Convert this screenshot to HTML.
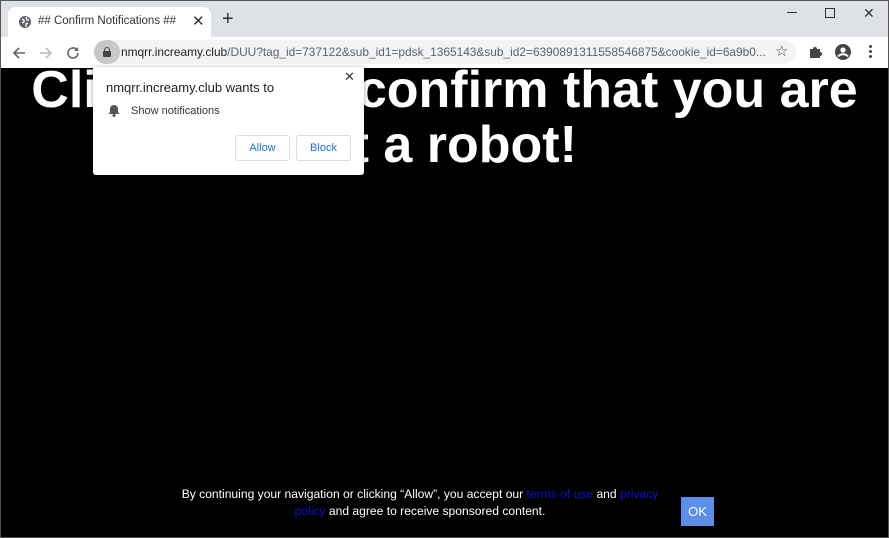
<!DOCTYPE html>
<html><head><style>
*{margin:0;padding:0;box-sizing:border-box}
body{width:889px;height:538px;overflow:hidden;background:#000;font-family:"Liberation Sans",Arial,sans-serif;position:relative}
.frame{position:absolute;inset:0;border:1px solid #555;pointer-events:none;z-index:10}
.tabbar{position:absolute;left:0;top:0;width:889px;height:37px;background:#dee1e6}
.tab{position:absolute;left:8px;top:7px;width:203px;height:30px;background:#fff;border-radius:8px 8px 0 0;font-size:11.5px;color:#333;}
.toolbar{position:absolute;left:0;top:37px;width:889px;height:31px;background:#fff}
.omni{position:absolute;left:94px;top:3px;width:702px;height:24px;background:#f1f3f4;border-radius:12px}
.url{position:absolute;left:121px;top:45px;width:645px;overflow:hidden;font-size:11.9px;color:#202124;white-space:nowrap}
.url span{color:#5f6368}
h1{position:absolute;left:0;top:63px;width:889px;text-align:center;color:#fff;font-size:52px;font-weight:bold;line-height:55px}
.pop{position:absolute;left:93px;top:67px;width:271px;height:108px;background:#fff;border-radius:0 0 3px 3px;box-shadow:0 1px 4px rgba(0,0,0,.4)}
.btn{position:absolute;top:68px;height:26px;border:1px solid #dadce0;border-radius:3px;color:#1a73e8;font-size:11px;text-align:center;line-height:24px}
.foot{position:absolute;left:180px;top:486px;width:480px;text-align:center;color:#fff;font-size:12.1px;line-height:17px}
.foot a{color:#1010d0;text-decoration:none}
.ok{position:absolute;left:681px;top:497px;width:33px;height:29px;background:#5b8ee6;color:#fff;font-size:13px;text-align:center;line-height:29px}
</style></head><body>
<div class="tabbar">
 <div class="tab">
  <svg style="position:absolute;left:10px;top:8px" width="14" height="14" viewBox="0 0 14 14"><circle cx="7" cy="7" r="6" fill="#5f6368"/><path d="M4 4l2 1 0 2-2 1M8 2l1 3 2 0M8 12l0-3 2-1" stroke="#fff" stroke-width="1.3" fill="none"/></svg>
  <span style="position:absolute;left:30px;top:8px">## Confirm Notifications ##</span>
  <span style="position:absolute;left:184px;top:5px;font-size:15px">✕</span>
 </div>
 <span style="position:absolute;left:222px;top:9px;font-size:20px;color:#333;line-height:20px">+</span>
 <span style="position:absolute;left:787px;top:12px;width:10px;height:1px;background:#333"></span>
 <span style="position:absolute;left:825px;top:8px;width:10px;height:10px;border:1px solid #333"></span>
 <span style="position:absolute;left:863px;top:5px;font-size:14px;color:#333">✕</span>
</div>
<div class="toolbar">
 <svg style="position:absolute;left:11px;top:8px" width="16" height="16" viewBox="0 0 16 16"><path d="M14 8H3M8 3L3 8l5 5" stroke="#5f6368" stroke-width="1.6" fill="none"/></svg>
 <svg style="position:absolute;left:38px;top:8px" width="16" height="16" viewBox="0 0 16 16"><path d="M2 8h11M8 3l5 5-5 5" stroke="#bbb" stroke-width="1.6" fill="none"/></svg>
 <svg style="position:absolute;left:65px;top:8px" width="16" height="16" viewBox="0 0 16 16"><path d="M13 8a5 5 0 1 1-1.5-3.6" stroke="#5f6368" stroke-width="1.6" fill="none"/><path d="M13 2v4h-4z" fill="#5f6368"/></svg>
 <div class="omni"><span style="position:absolute;left:0;top:0;width:26px;height:24px;border-radius:12px;background:#c8c8c8"></span><span style="position:absolute;left:9px;top:11px;width:8px;height:6px;background:#444;border-radius:1px"></span><span style="position:absolute;left:10px;top:7px;width:6px;height:6px;border:1.5px solid #444;border-radius:3px 3px 0 0"></span></div>
 <span style="position:absolute;left:775px;top:5px;font-size:15px;color:#444">☆</span>
 <svg style="position:absolute;left:808px;top:7px" width="15" height="15" viewBox="0 0 15 15"><path d="M2 5h3a2 2 0 1 1 4 0h3v3a2 2 0 1 1 0 4v2H2z" fill="#444"/></svg>
 <svg style="position:absolute;left:834px;top:6px" width="18" height="18" viewBox="0 0 18 18"><circle cx="9" cy="9" r="8" fill="#444"/><circle cx="9" cy="7" r="2.6" fill="#fff"/><path d="M4 13.5c2.5-3 7.5-3 10 0" stroke="#fff" stroke-width="2" fill="none"/></svg>
 <span style="position:absolute;left:869px;top:8px;width:3px;height:3px;background:#444;border-radius:2px;box-shadow:0 5px 0 #444,0 10px 0 #444"></span>
</div>
<div class="url">nmqrr.increamy.club<span>/DUU?tag_id=737122&amp;sub_id1=pdsk_1365143&amp;sub_id2=6390891311558546875&amp;cookie_id=6a9b0...</span></div>
<h1>Click here to confirm that you are<br><span style="position:relative;left:-12px">not a robot!</span></h1>
<div class="pop">
 <span style="position:absolute;left:251px;top:2px;font-size:13px;color:#333">✕</span>
 <div style="position:absolute;left:13px;top:13px;font-size:13px;color:#202124">nmqrr.increamy.club wants to</div>
 <svg style="position:absolute;left:15px;top:37px" width="12" height="13" viewBox="0 0 12 13"><path d="M6 1a4 4 0 0 1 4 4v3l1.5 2H.5L2 8V5a4 4 0 0 1 4-4z" fill="#555"/><circle cx="6" cy="11.5" r="1.5" fill="#555"/></svg>
 <div style="position:absolute;left:38px;top:38px;font-size:11px;color:#333">Show notifications</div>
 <div class="btn" style="left:142px;width:55px">Allow</div>
 <div class="btn" style="left:203px;width:55px">Block</div>
</div>
<div class="foot">By continuing your navigation or clicking “Allow”, you accept our <a>terms of use</a> and <a>privacy policy</a> and agree to receive sponsored content.</div>
<div class="ok">OK</div>
<div class="frame"></div>
</body></html>
